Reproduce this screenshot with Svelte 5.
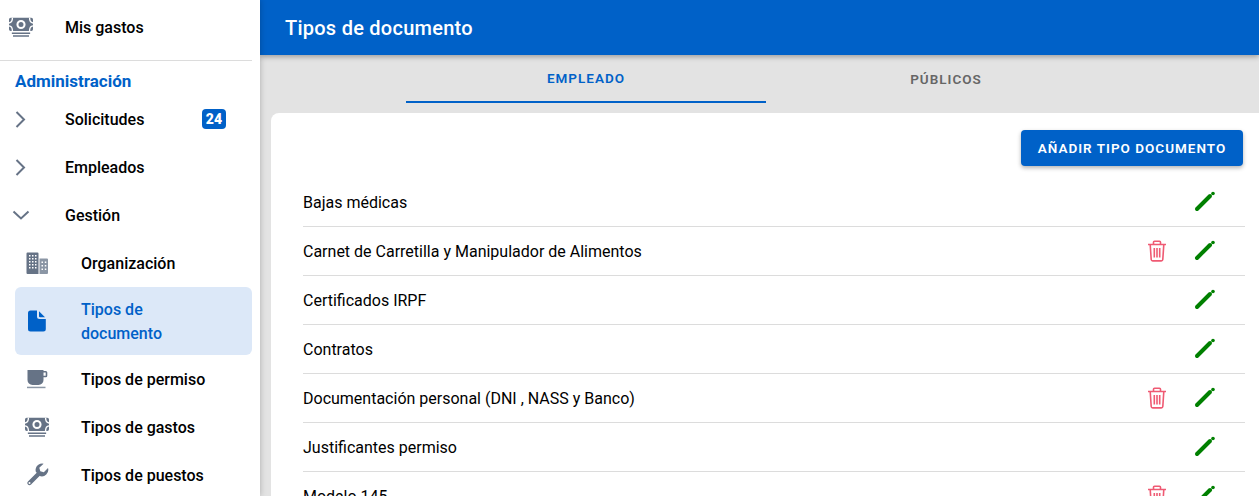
<script lang="ts">
  type Doc = { name: string; removable: boolean };

  const docs: Doc[] = [
    { name: 'Bajas médicas', removable: false },
    { name: 'Carnet de Carretilla y Manipulador de Alimentos', removable: true },
    { name: 'Certificados IRPF', removable: false },
    { name: 'Contratos', removable: false },
    { name: 'Documentación personal (DNI , NASS y Banco)', removable: true },
    { name: 'Justificantes permiso', removable: false },
    { name: 'Modelo 145', removable: true },
  ];

  const tabs = ['Empleado', 'Públicos'];
</script>

{#snippet cash()}
  <svg viewBox="1.500 1.500 21 21" class="icon">
    <path fill="#667386" fill-rule="evenodd" d="M3 4h18a1.500 1.500 0 0 1 1.500 1.500V14a1.500 1.500 0 0 1-1.500 1.500H3A1.500 1.500 0 0 1 1.500 14V5.500A1.500 1.500 0 0 1 3 4zM12 5.800a4 4 0 1 0 0 8 4 4 0 0 0 0-8zM12 7.600a2.200 2.200 0 1 1 0 4.400 2.200 2.200 0 0 1 0-4.400z"/>
    <path stroke="#fff" stroke-width="1.200" fill="none" d="M1 8.500c2 0 3.500-1.500 3.500-4.500M23 8.500c-2 0-3.500-1.500-3.500-4.500M1 11c2 0 3.500 1.500 3.500 4.500M23 11c-2 0-3.500 1.500-3.500 4.500"/>
    <path fill="#667386" d="M4 16.800h16v1.400H4zM5 19.200h14v1.400H5z"/>
  </svg>
{/snippet}

{#snippet chevronRight()}
  <svg viewBox="0 0 24 24" class="icon"><path fill="none" stroke="#667386" stroke-width="2" d="M7.500 5 15 12.500 7.500 20"/></svg>
{/snippet}

{#snippet chevronDown()}
  <svg viewBox="0 0 24 24" class="icon"><path fill="none" stroke="#667386" stroke-width="2" d="M4.500 8.500 12 15.500l7.500-7"/></svg>
{/snippet}

{#snippet building()}
  <svg viewBox="0 0 24 24" class="icon">
    <path fill="#667386" fill-rule="evenodd" d="M1.500 2.500A1 1 0 0 1 2.500 1.500h10a1 1 0 0 1 1 1V23H2.500a1 1 0 0 1-1-1zM4 4v1.500h1.500V4zM7 4v1.500h1.500V4zM10 4v1.500h1.500V4zM4 7v1.500h1.500V7zM7 7v1.500h1.500V7zM10 7v1.500h1.500V7zM4 10v1.500h1.500V10zM7 10v1.500h1.500V10zM10 10v1.500h1.500V10zM4 13v1.500h1.500V13zM7 13v1.500h1.500V13zM10 13v1.500h1.500V13zM4 16v1.500h1.500V16zM7 16v1.500h1.500V16zM10 16v1.500h1.500V16z"/>
    <path fill="#8b96a5" fill-rule="evenodd" d="M14.500 7.500h7.500a1 1 0 0 1 1 1V22a1 1 0 0 1-1 1h-7.500zM16.500 10.500V12H18v-1.500zM19.800 10.500V12h1.500v-1.500zM16.500 14V15.500H18V14zM19.800 14V15.500h1.500V14zM16.500 17.500V19H18v-1.500zM19.800 17.500V19h1.500v-1.500z"/>
  </svg>
{/snippet}

{#snippet file()}
  <svg viewBox="0 0 24 24" class="icon">
    <path fill="#0061c8" d="M5.500 1.500h6.500v6a2.500 2.500 0 0 0 2.500 2.500h6.300v10a2.500 2.500 0 0 1-2.500 2.500H5.500A2.500 2.500 0 0 1 3 20V4a2.500 2.500 0 0 1 2.500-2.500z"/>
    <path fill="#0061c8" d="M14 2.200 20 8.300h-5a1 1 0 0 1-1-1z"/>
  </svg>
{/snippet}

{#snippet cup()}
  <svg viewBox="0 0 24 24" class="icon">
    <path fill="#667386" fill-rule="evenodd" d="M2.500 3h16v1h2.300A1.500 1.500 0 0 1 22.300 5.500v3.200a1.500 1.500 0 0 1-1.500 1.500h-2.300V13a5 5 0 0 1-5 5h-6a5 5 0 0 1-5-5zM18.500 5.500v3.200h2.200V5.500z"/>
    <path fill="#8b96a5" d="M2 19.700h18.500v1.500H2z"/>
  </svg>
{/snippet}

{#snippet wrench()}
  <svg viewBox="0 0 24 24" class="icon">
    <path fill="none" stroke="#667386" stroke-width="4.400" stroke-linecap="round" d="M4.500 20 13 11.500"/>
    <circle cx="4.500" cy="20" r="1" fill="#fff"/>
    <path fill="#667386" d="M23 5 18.800 9.200l-3.500-1-1-3.400L18.600 .8a6.500 6.500 0 0 0-7.800 8l3.800 4.200A6.500 6.500 0 0 0 23 5z"/>
  </svg>
{/snippet}

{#snippet trash()}
  <svg viewBox="0 0 24 24" class="action">
    <g fill="none" stroke="#ef5a73" stroke-width="1.600">
      <path d="M3 5.500h18M8.500 5.500V3.200a1 1 0 0 1 1-1h5a1 1 0 0 1 1 1v2.300M5.200 5.500l1 15a1.500 1.500 0 0 0 1.500 1.400h8.600a1.500 1.500 0 0 0 1.500-1.400l1-15M9.300 9v9.500M12 9v9.500M14.700 9v9.500"/>
    </g>
  </svg>
{/snippet}

{#snippet pencil()}
  <svg viewBox="0 0 24 24" class="action">
    <path fill="none" stroke="#008000" stroke-width="4" stroke-linecap="round" d="M4 19 17 6"/>
    <circle cx="20" cy="3.500" r="1.800" fill="#008000"/>
  </svg>
{/snippet}

<div class="layout">
  <aside class="sidebar">
    <div class="item top">
      {@render cash()}<span>Mis gastos</span>
    </div>
    <hr />
    <h3>Administración</h3>
    <div class="item top">
      {@render chevronRight()}<span>Solicitudes</span><b class="badge">24</b>
    </div>
    <div class="item top">
      {@render chevronRight()}<span>Empleados</span>
    </div>
    <div class="item top">
      {@render chevronDown()}<span>Gestión</span>
    </div>
    <div class="item sub">
      {@render building()}<span>Organización</span>
    </div>
    <div class="item sub active">
      {@render file()}<span>Tipos de<br />documento</span>
    </div>
    <div class="item sub">
      {@render cup()}<span>Tipos de permiso</span>
    </div>
    <div class="item sub">
      {@render cash()}<span>Tipos de gastos</span>
    </div>
    <div class="item sub">
      {@render wrench()}<span>Tipos de puestos</span>
    </div>
  </aside>

  <main>
    <header><h1>Tipos de documento</h1></header>

    <nav class="tabs">
      {#each tabs as tab, i}
        <div class="tab" class:current={i === 0}>{tab}</div>
      {/each}
    </nav>

    <section class="card">
      <div class="toolbar"><button>Añadir tipo documento</button></div>
      <ul>
        {#each docs as doc}
          <li>
            <span class="name">{doc.name}</span>
            <span class="cell">{#if doc.removable}{@render trash()}{/if}</span>
            <span class="cell">{@render pencil()}</span>
          </li>
        {/each}
      </ul>
    </section>
  </main>
</div>

<style>
  :global(body) { margin: 0; background: #e3e3e3; font-family: Roboto, "Liberation Sans", sans-serif; }
  .layout { display: flex; height: 496px; overflow: hidden; }

  .sidebar {
    position: relative;
    z-index: 2;
    flex: 0 0 252px;
    padding: 3px 8px 0 0;
    background: #fff;
    box-shadow: 0 0 6px rgba(0, 0, 0, .25);
    overflow: hidden;
  }
  .sidebar hr { margin: 9px 0 0; border: 0; border-top: 1px solid #dcdcdc; }
  .sidebar h3 { margin: 0; padding: 10px 0 0 15px; height: 24px; font-size: 17px; line-height: 20px; font-weight: 700; color: #0061c8; }
  .item { display: flex; align-items: center; gap: 32px; min-height: 48px; font-size: 16px; font-weight: 500; line-height: 24px; color: #000; }
  .item span { margin-top: 2px; }
  .item.top { padding-left: 9px; }
  .item.sub { margin-left: 15px; padding-left: 10px; }
  .item.active { height: 68px; box-sizing: border-box; border-radius: 6px; background: #dce8f8; color: #0061c8; }
  .icon { flex: none; width: 24px; height: 24px; }
  .badge { margin-left: auto; margin-right: 26px; width: 24px; height: 20px; border-radius: 4px; background: #0061c8; color: #fff; font-size: 14px; font-weight: 900; line-height: 20px; letter-spacing: .25px; text-align: center; }

  main { flex: 1; min-width: 0; }
  header { position: relative; z-index: 1; height: 55px; background: #0061c8; box-shadow: 0 2px 5px rgba(0, 0, 0, .3); display: flex; align-items: center; padding-left: 25px; }
  h1 { margin: 0; font-size: 20px; font-weight: 500; letter-spacing: .25px; color: #fff; }

  .tabs { display: flex; height: 48px; padding-left: 146px; }
  .tab { width: 360px; box-sizing: border-box; display: flex; align-items: center; justify-content: center; font-size: 13.500px; font-weight: 600; letter-spacing: 1px; text-transform: uppercase; color: #666; }
  .tab.current { color: #0061c8; border-bottom: 2px solid #0061c8; }

  .card { margin: 10px 0 0 11px; padding: 17px 14px 0 32px; background: #fff; border-radius: 8px 0 0 0; }
  .toolbar { display: flex; justify-content: flex-end; margin-bottom: 12px; padding-right: 2px; }
  button { height: 36px; width: 222px; padding: 0; border: 0; border-radius: 4px; background: #0061c8; color: #fff; font: 600 13.500px Roboto, sans-serif; letter-spacing: 1px; text-transform: uppercase; box-shadow: 0 2px 4px rgba(0, 0, 0, .3); }

  ul { margin: 0; padding: 0 16px 0 0; list-style: none; position: relative; }
  li { display: flex; align-items: center; height: 48px; margin-right: -16px; padding-right: 16px; border-bottom: 1px solid #dcdcdc; font-size: 16px; color: #000; }
  .name { flex: 1; }
  .cell { flex: 0 0 48px; height: 24px; display: flex; justify-content: center; }
  .action { width: 24px; height: 24px; }
</style>
